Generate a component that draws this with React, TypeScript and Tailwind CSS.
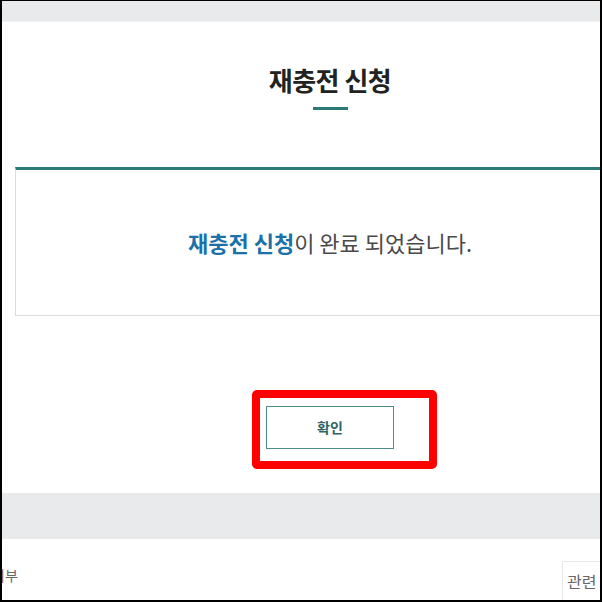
import React from "react";

export default function App() {
  const font = { fontFamily: '"Noto Sans CJK KR", "Noto Sans", sans-serif' };
  return (
    <div
      className="relative w-[602px] h-[602px] overflow-hidden bg-white border-l-2 border-r-2 border-t border-b-2 border-black box-border"
      style={font}
    >
      <div className="h-[21px] bg-[#e9eaeb] border-b border-[#f2f2f2]" />
      <div className="w-[630px] ml-[13px] flex flex-col items-center">
        <h1 className="mt-[42px] text-[26px] leading-[31px] font-bold text-[#222] tracking-[-0.5px]">
          재충전 신청
        </h1>
        <div className="mt-[12px] w-[35px] h-[3px] bg-[#2b7a78]" />
        <div className="mt-[57px] w-full h-[149px] border-t-[3px] border-t-[#2b7a78] border-l border-b border-r border-l-[#dcdcdc] border-b-[#dcdcdc] border-r-[#dcdcdc] flex items-center justify-center">
          <p className="text-[22px] leading-[30px] text-[#4a4a4a] pb-[2px]">
            <span className="font-bold text-[#1a72a8]">재충전 신청</span>이 완료 되었습니다.
          </p>
        </div>
        <button className="mt-[90px] w-[128px] h-[43px] border border-[#4f8d8b] bg-white text-[14px] font-bold text-[#2f6664]">
          확인
        </button>
      </div>
      <div className="mt-[44px] h-[46px] bg-[#e9eaeb]" />
      <div className="flex items-start justify-between">
        <span className="mt-[26px] ml-[-10px] text-[14px] leading-[20px] text-[#666]">여부</span>
        <div className="mt-[22px] mr-[-32px] w-[70px] h-[40px] border border-[#e6e6e6] flex items-center pl-[4px] text-[16px] text-[#666]">
          관련
        </div>
      </div>
      <div className="absolute left-[250px] top-[389px] w-[185px] h-[79px] border-[8px] border-[#ff0000] rounded-[5px]" />
    </div>
  );
}
